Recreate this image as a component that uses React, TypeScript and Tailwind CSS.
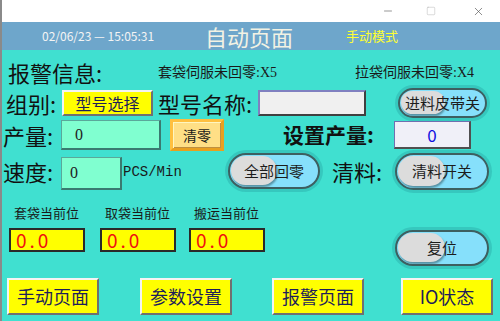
import React from 'react';
import { Minus, Square, X } from 'lucide-react';

const cjk = "font-['Noto_Sans_CJK_SC',sans-serif]";
const serif = "font-['Liberation_Serif','Noto_Sans_CJK_SC',serif]";

// pill switch with grey knob on the left
const Toggle: React.FC<{ label: string; w: string; h: string }> = ({ label, w, h }) => (
  <div
    className={`relative ${w} ${h} shrink-0 rounded-full border-2 border-[#3d5f60] bg-[#86e0fb] shadow-[0_0_0_3px_#36c8be] overflow-hidden`}
  >
    <div className="absolute left-[1px] top-[1px] bottom-[2px] w-[52%] rounded-full bg-[#dcdcdc] shadow-[1px_2px_2px_rgba(0,0,0,0.35)]" />
    <div className={`absolute inset-0 flex items-center justify-center text-[15px] text-[#1c1c1c] ${cjk}`}>
      {label}
    </div>
  </div>
);

const BevelButton: React.FC<{ label: string; w: string; h: string; text: string }> = ({ label, w, h, text }) => (
  <div
    className={`${w} ${h} shrink-0 flex items-center justify-center bg-[#ffff00] border-2 border-t-[#f4f4f4] border-l-[#f4f4f4] border-r-[#707070] border-b-[#707070] ${text} text-[#1e1e5a] ${cjk}`}
  >
    {label}
  </div>
);

const PosBox: React.FC = () => (
  <div className={`w-[76px] h-[24px] shrink-0 bg-[#ffff00] border-2 border-[#2a2a2a] flex items-center pl-[5px] text-[19px] tracking-[3px] text-[#f01010] ${cjk}`}>
    0.0
  </div>
);

export default function App() {
  return (
    <div className="w-[500px] h-[321px] flex flex-col overflow-hidden bg-white">
      {/* window title bar */}
      <div className="h-[22px] shrink-0 flex items-center justify-end border-l-2 border-[#8a8a8a] text-[#505050]">
        <Minus size={12} strokeWidth={1.2} className="mr-[32px]" />
        <Square size={10} strokeWidth={1} className="mr-[36px] text-[#a8a8a8]" />
        <X size={13} strokeWidth={1.2} className="mr-[15px]" />
      </div>

      {/* header */}
      <div className="h-[28px] shrink-0 flex items-center bg-[#6ea6cb] border-l-2 border-[#8a8a8a]">
        <div className={`w-[203px] pl-[40px] text-[12px] text-[#f4f4f4] whitespace-nowrap ${cjk}`}>
          02/06/23 — 15:05:31
        </div>
        <div className={`w-[141px] text-[22px] leading-none text-[#f2f2e4] ${cjk}`}>自动页面</div>
        <div className={`text-[13px] text-[#ffff30] ${cjk}`}>手动模式</div>
      </div>

      {/* body */}
      <div className="flex-1 flex flex-col bg-[#40e0d0] border-l-2 border-[#8a8a8a]">
        {/* alarm row */}
        <div className="h-[38px] shrink-0 flex items-center pt-[6px] pl-[6px] whitespace-nowrap">
          <div className={`w-[150px] shrink-0 text-[22px] text-[#111] ${cjk}`}>报警信息:</div>
          <div className={`w-[197px] shrink-0 text-[14px] text-[#1a1a1a] ${serif}`}>套袋伺服未回零:X5</div>
          <div className={`shrink-0 text-[14px] text-[#1a1a1a] ${serif}`}>拉袋伺服未回零:X4</div>
        </div>

        {/* group row */}
        <div className="h-[30px] shrink-0 flex items-center pl-[4px]">
          <div className={`w-[56px] shrink-0 text-[22px] text-[#111] ${cjk}`}>组别:</div>
          <BevelButton label="型号选择" w="w-[91px]" h="h-[26px]" text="text-[16px]" />
          <div className={`ml-[5px] w-[100px] shrink-0 text-[22px] text-[#111] ${cjk}`}>型号名称:</div>
          <div className="w-[108px] h-[26px] shrink-0 bg-[#f0f0f0] border-2 border-t-[#8080c0] border-l-[#8080c0] border-r-[#404040] border-b-[#404040]" />
          <div className="ml-[32px]">
            <Toggle label="进料皮带关" w="w-[89px]" h="h-[30px]" />
          </div>
        </div>

        {/* output row */}
        <div className="h-[34px] shrink-0 flex items-center pl-[1px]">
          <div className={`w-[58px] shrink-0 text-[22px] text-[#111] ${cjk}`}>产量:</div>
          <div className={`w-[100px] h-[30px] shrink-0 bg-[#80ffd0] border border-[#5aa89a] border-r-2 border-b-2 border-r-[#3a7a70] border-b-[#3a7a70] flex items-center pl-[13px] text-[16px] text-[#222] ${serif}`}>
            0
          </div>
          <div className={`ml-[9px] w-[54px] h-[32px] shrink-0 flex items-center justify-center bg-[#ffdf86] border-[3px] border-t-[#ffc040] border-l-[#ffc040] border-r-[#e8a020] border-b-[#e8a020] shadow-[inset_1px_1px_0_#fff6c0,inset_-1px_-1px_0_#c09040] text-[14px] text-[#1a1a1a] ${cjk}`}>
            清零
          </div>
          <div className={`ml-[59px] w-[111px] shrink-0 text-[21px] font-bold text-[#111] ${cjk}`}>设置产量:</div>
          <div className={`w-[77px] h-[28px] shrink-0 bg-[#f0f0f8] border border-[#7070b0] border-r-2 border-b-2 border-r-[#505050] border-b-[#505050] flex items-center justify-center text-[17px] text-[#1010e0] ${cjk}`}>
            0
          </div>
        </div>

        {/* speed row */}
        <div className="h-[38px] shrink-0 flex items-center pl-[1px]">
          <div className={`w-[58px] shrink-0 text-[22px] text-[#111] ${cjk}`}>速度:</div>
          <div className={`mt-[5px] w-[61px] h-[33px] shrink-0 bg-[#80ffd0] border border-[#5aa89a] border-r-2 border-b-2 border-r-[#3a7a70] border-b-[#3a7a70] flex items-center pl-[8px] text-[16px] text-[#222] ${serif}`}>
            0
          </div>
          <div className="ml-[1px] w-[105px] shrink-0 mt-[2px] text-[14px] text-[#1a1a1a] font-['Liberation_Mono',monospace]">
            PCS/Min
          </div>
          <Toggle label="全部回零" w="w-[92px]" h="h-[36px]" />
          <div className={`ml-[12px] w-[63px] shrink-0 text-[22px] text-[#111] ${cjk}`}>清料:</div>
          <Toggle label="清料开关" w="w-[94px]" h="h-[37px]" />
        </div>

        {/* position labels */}
        <div className={`h-[36px] shrink-0 flex items-end pb-[3px] pl-[12px] text-[13px] text-[#1a1a1a] whitespace-nowrap ${serif}`}>
          <div className="w-[91px] shrink-0">套袋当前位</div>
          <div className="w-[89px] shrink-0">取袋当前位</div>
          <div className="shrink-0">搬运当前位</div>
        </div>

        {/* position values + reset */}
        <div className="h-[42px] shrink-0 flex items-start pt-[2px] pl-[7px]">
          <PosBox />
          <div className="ml-[15px]">
            <PosBox />
          </div>
          <div className="ml-[13px]">
            <PosBox />
          </div>
          <div className="ml-[130px] mt-[2px]">
            <Toggle label="复位" w="w-[94px]" h="h-[36px]" />
          </div>
        </div>

        {/* bottom nav */}
        <div className="flex-1 flex items-start pt-[10px] pl-[5px]">
          <BevelButton label="手动页面" w="w-[92px]" h="h-[37px]" text="text-[18px]" />
          <div className="ml-[41px]">
            <BevelButton label="参数设置" w="w-[92px]" h="h-[37px]" text="text-[18px]" />
          </div>
          <div className="ml-[40px]">
            <BevelButton label="报警页面" w="w-[92px]" h="h-[37px]" text="text-[18px]" />
          </div>
          <div className="ml-[37px]">
            <BevelButton label="IO状态" w="w-[92px]" h="h-[37px]" text="text-[18px]" />
          </div>
        </div>
      </div>
    </div>
  );
}
